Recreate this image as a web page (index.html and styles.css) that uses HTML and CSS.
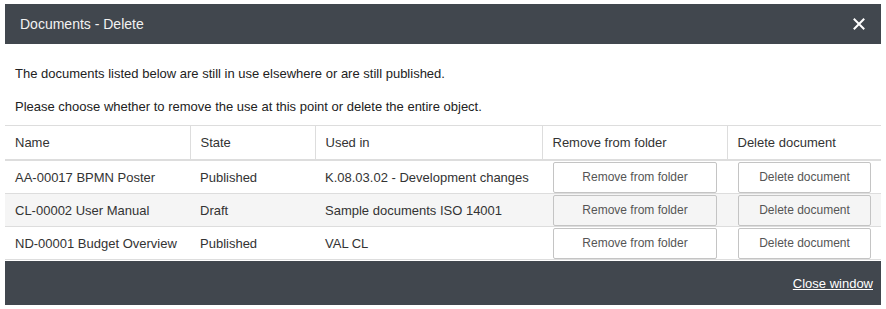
FILE: index.html
```html
<!DOCTYPE html>
<html>
<head>
    <meta charset="UTF-8">
    <title>Documents - Delete</title>
    <link rel="stylesheet" href="styles.css">
</head>
<body>
    <div class="dialog">
        <div class="dialog-header">
            <span class="dialog-title">Documents - Delete</span>
            <button class="close-x" title="Close">
                <svg width="12" height="12" viewBox="0 0 12 12">
                    <path d="M1.5 1.5 L10.5 10.5 M10.5 1.5 L1.5 10.5" stroke="#fff" stroke-width="2" stroke-linecap="square"/>
                </svg>
            </button>
        </div>

        <div class="dialog-body">
            <p class="intro">The documents listed below are still in use elsewhere or are still published.</p>
            <p class="intro">Please choose whether to remove the use at this point or delete the entire object.</p>

            <table class="doc-table">
                <colgroup>
                    <col style="width: 185px">
                    <col style="width: 125px">
                    <col style="width: 227px">
                    <col style="width: 185px">
                    <col>
                </colgroup>
                <thead>
                    <tr>
                        <th>Name</th>
                        <th>State</th>
                        <th>Used in</th>
                        <th>Remove from folder</th>
                        <th>Delete document</th>
                    </tr>
                </thead>
                <tbody>
                    <tr>
                        <td>AA-00017 BPMN Poster</td>
                        <td>Published</td>
                        <td>K.08.03.02 - Development changes</td>
                        <td class="btn-cell"><button class="action-btn">Remove from folder</button></td>
                        <td class="btn-cell"><button class="action-btn">Delete document</button></td>
                    </tr>
                    <tr class="striped">
                        <td>CL-00002 User Manual</td>
                        <td>Draft</td>
                        <td>Sample documents ISO 14001</td>
                        <td class="btn-cell"><button class="action-btn">Remove from folder</button></td>
                        <td class="btn-cell"><button class="action-btn">Delete document</button></td>
                    </tr>
                    <tr>
                        <td>ND-00001 Budget Overview</td>
                        <td>Published</td>
                        <td>VAL CL</td>
                        <td class="btn-cell"><button class="action-btn">Remove from folder</button></td>
                        <td class="btn-cell"><button class="action-btn">Delete document</button></td>
                    </tr>
                </tbody>
            </table>
        </div>

        <div class="dialog-footer">
            <a href="#" class="close-link">Close window</a>
        </div>
    </div>
</body>
</html>
```

FILE: styles.css
```css
body {
    margin: 0;
    padding: 4px 5px 3px 5px;
    background: #fff;
    font-family: 'Liberation Sans', Arial, sans-serif;
    color: #222;
}

.dialog {
    width: 876px;
    background: #fff;
}

.dialog-header {
    background: #41474e;
    height: 40px;
    display: flex;
    align-items: center;
    justify-content: space-between;
    padding: 0 16px 0 15px;
}

.dialog-title {
    color: #f2f2f2;
    font-size: 14px;
}

.close-x {
    background: none;
    border: none;
    padding: 0;
    width: 12px;
    height: 12px;
    cursor: pointer;
    display: flex;
}

.dialog-body {
    padding-top: 22px;
}

.intro {
    margin: 0 0 18px 10px;
    font-size: 13px;
    line-height: 15px;
    color: #222;
}

.intro + .intro {
    margin-bottom: 11px;
}

.doc-table {
    width: 100%;
    border-collapse: collapse;
    table-layout: fixed;
    font-size: 13px;
    line-height: 15px;
    color: #333;
}

.doc-table th {
    font-weight: normal;
    text-align: left;
    height: 33px;
    padding: 0 10px;
    border-top: 1px solid #ddd;
    border-bottom: 2px solid #ddd;
    border-left: 1px solid #ddd;
}

.doc-table th:first-child {
    border-left: none;
}

.doc-table td {
    height: 32px;
    padding: 0 10px;
    border-bottom: 1px solid #ddd;
    white-space: nowrap;
}

.doc-table td.btn-cell {
    padding: 0 10px 0 11px;
}

.doc-table tr.striped td {
    background: #f5f5f5;
}

.action-btn {
    display: block;
    width: 100%;
    height: 31px;
    background: transparent;
    border: 1px solid #c4c4c4;
    border-radius: 2px;
    font-family: 'Liberation Sans', Arial, sans-serif;
    font-size: 12px;
    color: #555;
    cursor: pointer;
}

.dialog-footer {
    margin-top: 1px;
    background: #41474e;
    height: 44px;
    display: flex;
    align-items: center;
    justify-content: flex-end;
    padding-right: 8px;
}

.close-link {
    color: #fff;
    font-size: 13px;
    text-decoration: underline;
}
```
